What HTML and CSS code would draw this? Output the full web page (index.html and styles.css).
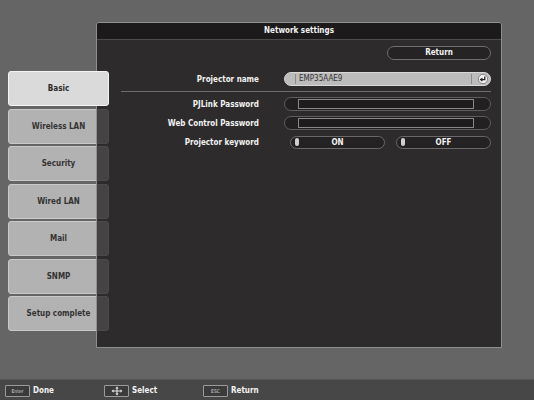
FILE: index.html
```html
<!DOCTYPE html>
<html lang="en">
<head>
    <meta charset="UTF-8">
    <title>Network settings</title>
    <link rel="stylesheet" href="styles.css">
</head>
<body>

<div class="screen">
    <div class="tabs">
        <div class="tab active">Basic</div>
        <div class="tab">Wireless LAN</div>
        <div class="tab">Security</div>
        <div class="tab">Wired LAN</div>
        <div class="tab">Mail</div>
        <div class="tab">SNMP</div>
        <div class="tab">Setup complete</div>
    </div>

    <div class="panel">
        <div class="panel-title">Network settings</div>
        <div class="panel-body">
            <div class="return-row">
                <div class="pill-btn">Return</div>
            </div>

            <div class="form-row">
                <div class="label">Projector name</div>
                <div class="name-field">
                    <span class="name-text">EMP35AAE9</span>
                    <svg class="enter-icon" width="10" height="10" viewBox="0 0 10 10">
                        <circle cx="5" cy="5" r="4.6" fill="#f2f2f2" stroke="#555" stroke-width="0.6"/>
                        <path d="M6.8 2.6 V5.6 H3.2" fill="none" stroke="#222" stroke-width="1.3"/>
                        <path d="M4.4 4.2 L2.6 5.6 L4.4 7" fill="none" stroke="#222" stroke-width="1.2"/>
                    </svg>
                </div>
            </div>

            <div class="divider"></div>

            <div class="form-row">
                <div class="label">PJLink Password</div>
                <div class="pass-field"><div class="pass-inner"></div></div>
            </div>
            <div class="form-row">
                <div class="label">Web Control Password</div>
                <div class="pass-field"><div class="pass-inner"></div></div>
            </div>
            <div class="form-row keyword-row">
                <div class="label">Projector keyword</div>
                <div class="toggles">
                    <div class="toggle"><span class="knob"></span><span class="toggle-text">ON</span></div>
                    <div class="toggle"><span class="knob"></span><span class="toggle-text">OFF</span></div>
                </div>
            </div>
        </div>
    </div>
</div>

<div class="footer">
    <div class="hint"><span class="key">Enter</span>Done</div>
    <div class="hint">
        <span class="key">
            <svg width="12" height="10" viewBox="0 0 12 10">
                <path d="M6 0.5 L4.3 2.4 H7.7 Z M6 9.5 L4.3 7.6 H7.7 Z M0.6 5 L2.5 3.3 V6.7 Z M11.4 5 L9.5 3.3 V6.7 Z" fill="#e8e8e8"/>
                <path d="M6 2 V8 M2 5 H10" stroke="#e8e8e8" stroke-width="1"/>
            </svg>
        </span>Select
    </div>
    <div class="hint"><span class="key">ESC</span>Return</div>
</div>

</body>
</html>
```

FILE: styles.css
```css
body {
    margin: 0;
    width: 534px;
    height: 400px;
    background-color: #666565;
    font-family: "DejaVu Sans Condensed", "DejaVu Sans", sans-serif;
    font-weight: bold;
    font-size: 8px;
    color: #f2f2f2;
    overflow: hidden;
}
.screen {
    display: flex;
    height: 379px;
}
.tabs {
    display: flex;
    flex-direction: column;
    gap: 2.5px;
    width: 101px;
    margin-left: 8px;
    margin-top: 71px;
}
.tab {
    height: 35px;
    box-sizing: border-box;
    border: 1px solid #c9c9c9;
    border-radius: 3px;
    background-color: #b3b2b2;
    color: #333;
    display: flex;
    align-items: center;
    justify-content: center;
}
.tab.active {
    position: relative;
    z-index: 1;
    background-color: #dadada;
    border-color: #f4f4f4;
    color: #2a2a2a;
}
.panel {
    margin-left: -13px;
    margin-top: 22px;
    width: 406px;
    height: 326px;
    box-sizing: border-box;
    border: 1px solid #8f8f8f;
    border-radius: 3px 3px 0 0;
    background-color: rgba(21, 18, 19, 0.69);
}
.panel-title {
    height: 16px;
    line-height: 16px;
    background-color: #1c1a1b;
    border-bottom: 1px solid #4d4b4c;
    text-align: center;
    border-radius: 2px 2px 0 0;
}
.panel-body {
    padding: 6px 10px 0 0;
}
.return-row {
    display: flex;
    justify-content: flex-end;
    margin-bottom: 12px;
}
.pill-btn {
    width: 104px;
    height: 14px;
    box-sizing: border-box;
    border: 1px solid #6f6d6e;
    border-radius: 7px;
    background-color: #262324;
    text-align: center;
    line-height: 12px;
}
.form-row {
    display: grid;
    grid-template-columns: 162px 207px;
    column-gap: 25px;
    align-items: center;
    height: 14px;
    margin-bottom: 5px;
}
.keyword-row {
    margin-top: 1px;
}
.label {
    text-align: right;
}
.name-field {
    height: 14px;
    box-sizing: border-box;
    border: 1px solid #d8d8d8;
    border-radius: 7px;
    background-color: #bdbcbc;
    display: flex;
    align-items: center;
    justify-content: space-between;
    padding: 0 2px 0 10px;
}
.name-text {
    color: #333;
    font-weight: normal;
    border-left: 1px solid #8a8a8a;
    border-right: 1px solid #8a8a8a;
    padding-left: 3px;
    width: 172px;
    line-height: 10px;
}
.enter-icon {
    display: block;
}
.divider {
    height: 1px;
    background-color: #6e6c6d;
    margin: 1px 0 5px 24px;
}
.pass-field {
    height: 14px;
    box-sizing: border-box;
    border: 1px solid #5e5c5d;
    border-radius: 7px;
    background-color: #232021;
    padding: 1px 16px 1px 13px;
}
.pass-inner {
    height: 10px;
    box-sizing: border-box;
    border: 1px solid #8a8889;
    background-color: #1f1c1d;
}
.toggles {
    display: flex;
    gap: 11px;
    padding-left: 6px;
}
.toggle {
    width: 95px;
    height: 13px;
    box-sizing: border-box;
    border: 1px solid #6a6869;
    border-radius: 7px;
    background-color: #252223;
    display: flex;
    align-items: center;
    padding-left: 4px;
}
.knob {
    width: 4px;
    height: 8px;
    border-radius: 2px;
    background-color: #d0d0d0;
}
.toggle-text {
    flex: 1;
    text-align: center;
    padding-right: 8px;
}
.footer {
    height: 21px;
    background-color: #484747;
    border-top: 1px solid #555;
    display: flex;
    align-items: center;
    padding-left: 5px;
}
.hint {
    display: flex;
    align-items: center;
    width: 99px;
}
.key {
    width: 25px;
    height: 12px;
    box-sizing: border-box;
    border: 1px solid #9a9a9a;
    border-radius: 1px;
    background-color: #3c3b3b;
    color: #d8d8d8;
    font-size: 5px;
    font-weight: normal;
    display: flex;
    align-items: center;
    justify-content: center;
    margin-right: 3px;
}
```
